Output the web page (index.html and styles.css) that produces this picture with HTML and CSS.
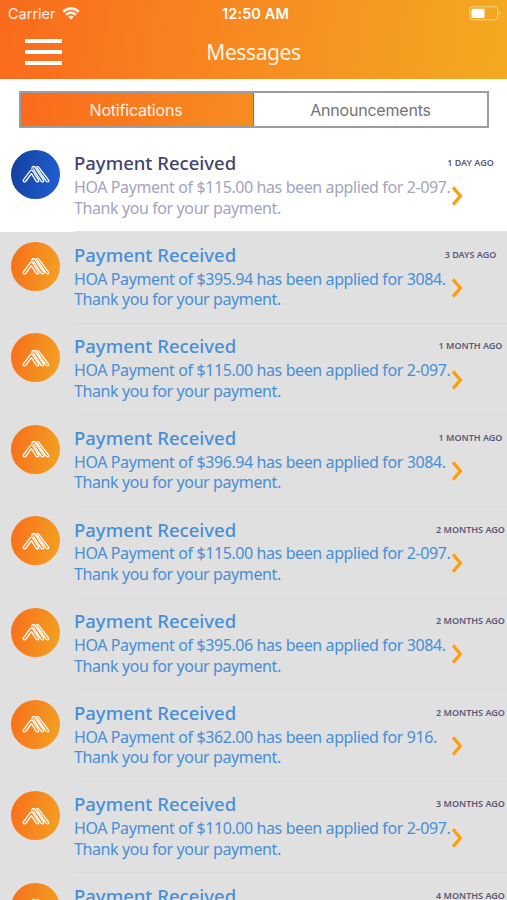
FILE: index.html
```html
<!DOCTYPE html>
<html lang="en">
<head>
<meta charset="utf-8">
<title>Messages</title>
<link rel="stylesheet" href="styles.css">
</head>
<body>
<svg class="defs" width="0" height="0" aria-hidden="true">
  <symbol id="logo" viewBox="0 0 28 18">
    <g fill="none" stroke="#fff" stroke-width="1.3" stroke-linejoin="round" stroke-linecap="round">
      <path d="M9.4 8.6 4 16Q3 17.2 1.8 16.6Q.8 15.9 1.6 14.7L8.4 5.6Q9.6 4.4 10.7 5.9L16.6 15.2Q17 16.8 15.6 16.8Q14.6 16.8 14 15.9Z"/>
      <path d="M9.8 3.4Q10.5.6 12.7 1.9L21.6 15.2Q22 16.8 20.7 16.8Q19.6 16.8 18.9 15.8L11.4 4"/>
      <path d="M14.4 1.9Q15.8 1 17 2.7L26.6 15.2Q27.3 16.7 25.9 16.8Q24.8 16.9 24 15.9L15.2 3.4"/>
    </g>
  </symbol>
  <symbol id="chevron" viewBox="0 0 12 20">
    <path d="M2 1.4 9.4 10 2 18.6" fill="none" stroke="#ff9d0c" stroke-width="3.2"/>
  </symbol>
</svg>
<header class="header">
  <div class="status">
    <div class="carrier">Carrier
      <svg width="18" height="13" viewBox="0 0 18 13" fill="none" stroke="#fff" stroke-width="2.5"><path d="M1.2 4.8Q9-2 16.8 4.8M4 7.8Q9 3.4 14 7.8"/><path d="M9 12.6 6.2 9.8Q9 7.6 11.8 9.8Z" fill="#fff" stroke="none"/></svg>
    </div>
    <div class="clock">12:50 AM</div>
    <svg class="battery" width="33" height="15" viewBox="0 0 33 15"><rect x=".8" y=".8" width="28" height="13" rx="3" fill="none" stroke="#fff" stroke-opacity=".5"/><rect x="2.5" y="2.7" width="13" height="9.2" rx="1" fill="#fff"/><path d="M30.3 5Q32.4 7.3 30.3 9.6Z" fill="#fff" fill-opacity=".5"/></svg>
  </div>
  <nav class="bar">
    <div class="menu"><span></span><span></span><span></span></div>
    <h1>Messages</h1>
  </nav>
</header>
<div class="tabs"><div class="tab active">Notifications</div><div class="tab">Announcements</div></div>
<main class="list" id="list"></main>
<script src="app.js"></script>
</body>
</html>
```
FILE: styles.css
```css
* { box-sizing: border-box; }
body { margin: 0; height: 900px; overflow: hidden; background: #fff; font-family: "Noto Sans", sans-serif; }
.defs { display: block; }
.header { height: 79px; background: linear-gradient(98deg, #fa6a1c 0%, #f78a20 48%, #f3aa20 100%); color: #fff; }
.status { display: grid; grid-template-columns: 1fr auto 1fr; align-items: center; height: 27px; padding: 0 5px 0 8px; font: 14.5px/27px Inter, sans-serif; }
.carrier { display: flex; align-items: center; gap: 6px; opacity: .9; }
.clock { font-weight: 600; letter-spacing: .1px; padding-left: 1px; }
.battery { justify-self: end; }
.bar { display: grid; grid-template-columns: 100px 1fr 100px; height: 52px; }
.menu { display: flex; flex-direction: column; gap: 7px; padding: 12px 0 0 25px; }
.menu span { width: 37px; height: 4px; background: #fff; }
h1 { margin: 0; font: 400 21px/50px "Noto Sans", sans-serif; letter-spacing: -.4px; text-align: center; color: #fff3e4; }
.tabs { display: flex; width: 470px; height: 37px; margin: 12px 0 12.6px 19px; border: 2px solid #9b9da1; }
.tab { flex: 1; text-align: center; font: 16px/34px Inter, sans-serif; letter-spacing: -.2px; color: #737477; }
.active { flex: 0 0 233px; padding-right: 2px; color: #fff3e4; background: linear-gradient(98deg, #fa6a1c, #f68d20); border-right: 1px solid #667b98; }
.row { display: flex; height: 91.6px; padding-left: 11px; background: #e0e0e0; color: #468fd7; }
.avatar { display: flex; align-items: center; justify-content: center; width: 49px; height: 49px; margin: 9.4px 14px 0 0; border-radius: 50%; background: linear-gradient(100deg, #f96d1b, #f2a322); }
.avatar svg { width: 28px; height: 18px; }
.content { display: flex; flex: 1; border-bottom: 1px solid #d9d9d9; }
.text { width: 361px; white-space: nowrap; }
.text h2 { margin: 0; padding-top: 9.6px; font-size: 18.5px; line-height: 26px; font-weight: 500; }
.text p { margin: .8px 0 0; font-size: 16px; line-height: 20.7px; letter-spacing: -.4px; }
.side { display: flex; flex-direction: column; align-items: center; width: 71px; }
.time { color: #5a5878; font-size: 9px; line-height: 12px; font-weight: 600; margin-top: 16.7px; white-space: nowrap; }
.side svg { width: 12px; height: 20px; margin: 17.2px 28px 0 0; }
.unread { background: #fff; color: #a4a4bf; }
.unread h2 { color: #45436a; }
.unread .content { border-color: #e4e4e4; }
.unread .avatar { background: linear-gradient(100deg, #133f9c, #2160d4); }
```
FILE: app.js
```js
const messages = [
  ["$115.00", "2-097", "1 DAY AGO"],
  ["$395.94", "3084", "3 DAYS AGO"],
  ["$115.00", "2-097", "1 MONTH AGO"],
  ["$396.94", "3084", "1 MONTH AGO"],
  ["$115.00", "2-097", "2 MONTHS AGO"],
  ["$395.06", "3084", "2 MONTHS AGO"],
  ["$362.00", "916", "2 MONTHS AGO"],
  ["$110.00", "2-097", "3 MONTHS AGO"],
  ["", "", "4 MONTHS AGO"]
];
const body = (amount, unit) => amount
  ? `<p>HOA Payment of ${amount} has been applied for ${unit}.<br>Thank you for your payment.</p>`
  : "";
document.getElementById("list").innerHTML = messages.map(([amount, unit, time], i) => `
  <article class="row${i === 0 ? " unread" : ""}">
    <div class="avatar"><svg><use href="#logo"/></svg></div>
    <div class="content">
      <div class="text"><h2>Payment Received</h2>${body(amount, unit)}</div>
      <div class="side"><span class="time">${time}</span><svg><use href="#chevron"/></svg></div>
    </div>
  </article>`).join("");
```
